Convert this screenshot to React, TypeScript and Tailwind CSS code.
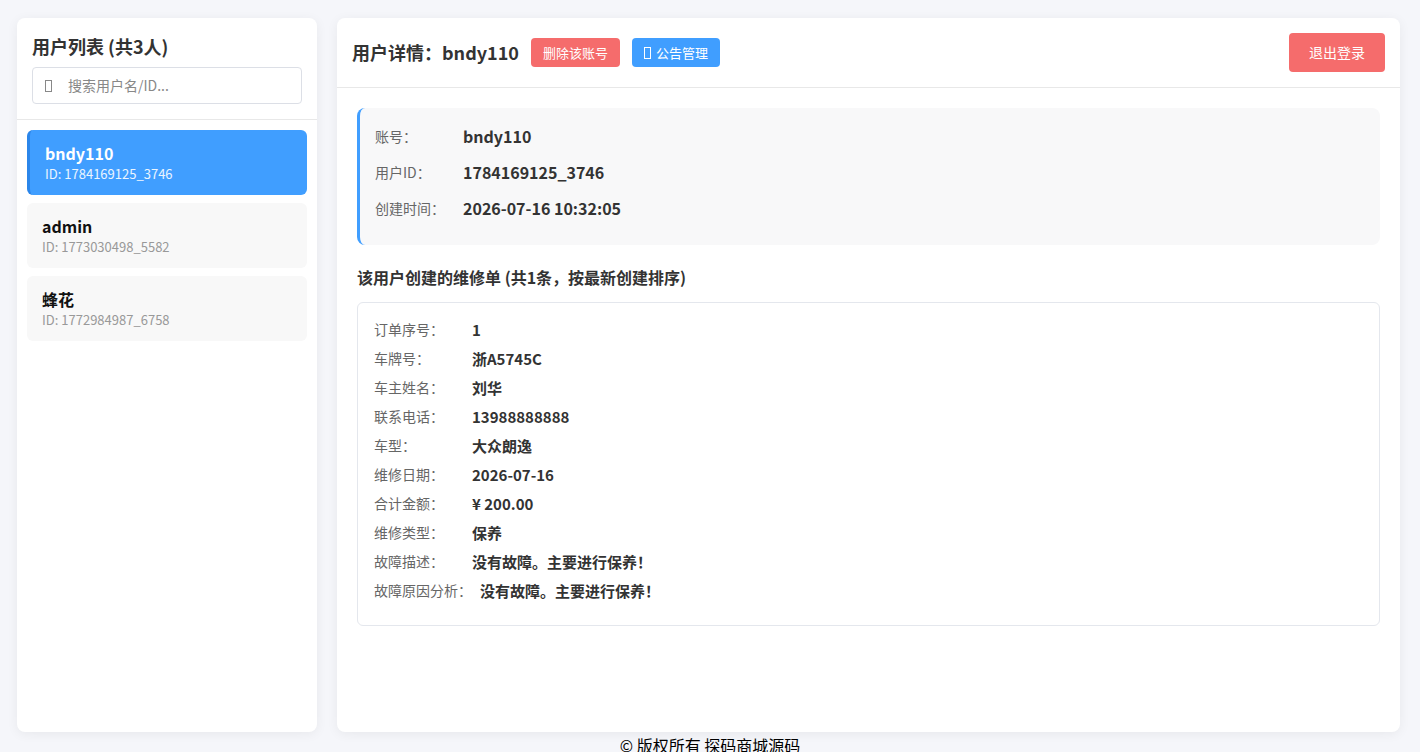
import { useState } from 'react';

const users = [
  { name: 'bndy110', id: '1784169125_3746' },
  { name: 'admin', id: '1773030498_5582' },
  { name: '蜂花', id: '1772984987_6758' },
];

const order = [
  ['订单序号：', '1'],
  ['车牌号：', '浙A5745C'],
  ['车主姓名：', '刘华'],
  ['联系电话：', '13988888888'],
  ['车型：', '大众朗逸'],
  ['维修日期：', '2026-07-16'],
  ['合计金额：', '¥ 200.00'],
  ['维修类型：', '保养'],
  ['故障描述：', '没有故障。主要进行保养！'],
  ['故障原因分析：', '没有故障。主要进行保养！'],
];

// missing-glyph box, as the emoji fails to render in the original
function Tofu({ className }: { className: string }) {
  return <span className={`inline-block w-[7px] h-[12px] border ${className}`} />;
}

export default function App() {
  const [active, setActive] = useState(0);
  const current = users[active];

  return (
    <div className="bg-[#f5f6fa] text-[#333] font-['Noto_Sans_CJK_SC','Noto_Sans',sans-serif]">
      <div className="flex gap-5 pl-[17px] pr-5 pt-[18px] h-[732px]">
        {/* User list */}
        <aside className="w-[300px] shrink-0 bg-white rounded-lg shadow-[0_2px_12px_rgba(0,0,0,0.06)] flex flex-col">
          <div className="p-[15px] border-b border-[#e8e8e8]">
            <h2 className="text-[18px] font-bold leading-[26px] mb-2">用户列表 (共3人)</h2>
            <div className="flex items-center h-[37px] border border-[#dcdfe6] rounded px-3">
              <Tofu className="border-[#888]" />
              <input
                className="ml-[16px] flex-1 outline-none text-[14px] placeholder:text-[#888]"
                placeholder="搜索用户名/ID..."
              />
            </div>
          </div>
          <div className="p-[10px] flex flex-col gap-2">
            {users.map((u, i) => (
              <button
                key={u.id}
                onClick={() => setActive(i)}
                className={
                  i === active
                    ? 'text-left rounded-md py-3 px-[15px] bg-[#409eff] border-l-[3px] border-[#2b86ea] text-white'
                    : 'text-left rounded-md py-3 px-[15px] bg-[#f8f8f8] text-[#111]'
                }
              >
                <div className="text-[16px] font-bold leading-[22px]">{u.name}</div>
                <div className={`text-[13px] leading-[18px] mt-[1px] ${i === active ? 'text-white/90' : 'text-[#999]'}`}>
                  ID: {u.id}
                </div>
              </button>
            ))}
          </div>
        </aside>

        {/* Detail */}
        <main className="flex-1 bg-white rounded-lg shadow-[0_2px_12px_rgba(0,0,0,0.06)] flex flex-col">
          <div className="h-[70px] px-[15px] flex items-center border-b border-[#e8e8e8]">
            <h1 className="text-[18px] font-bold">用户详情：{current.name}</h1>
            <button className="ml-3 h-[29px] px-3 rounded bg-[#f56c6c] text-white text-[13px]">删除该账号</button>
            <button className="ml-3 h-[29px] px-3 rounded bg-[#409eff] text-white text-[13px] flex items-center gap-[5px]">
              <Tofu className="border-white w-[6px] h-[11px]" />
              公告管理
            </button>
            <button className="ml-auto h-[39px] px-5 rounded bg-[#f56c6c] text-white text-[14px]">退出登录</button>
          </div>

          <div className="p-5">
            <div className="bg-[#f8f8f9] rounded-lg border-l-[3px] border-[#409eff] pl-[15px] pt-4 pb-[13px]">
              {[
                ['账号：', current.name],
                ['用户ID：', current.id],
                ['创建时间：', '2026-07-16 10:32:05'],
              ].map(([k, v]) => (
                <div key={k} className="flex items-center mb-3 leading-6">
                  <span className="w-[80px] mr-2 text-[14px] text-[#666]">{k}</span>
                  <span className="text-[16px] font-bold">{v}</span>
                </div>
              ))}
            </div>

            <h3 className="mt-[21px] mb-[14px] text-[16px] font-bold leading-[22px]">
              该用户创建的维修单 (共1条，按最新创建排序)
            </h3>

            <div className="border border-[#e4e7ed] rounded-md p-4">
              {order.map(([k, v]) => (
                <div key={k} className="flex items-center mb-2 leading-[21px]">
                  <span className="min-w-[90px] mr-2 text-[14px] text-[#666]">{k}</span>
                  <span className="text-[15px] font-bold">{v}</span>
                </div>
              ))}
            </div>
          </div>
        </main>
      </div>
      <footer className="text-center text-[16px] leading-6 text-black pt-[1px]">© 版权所有 探码商城源码</footer>
    </div>
  );
}
